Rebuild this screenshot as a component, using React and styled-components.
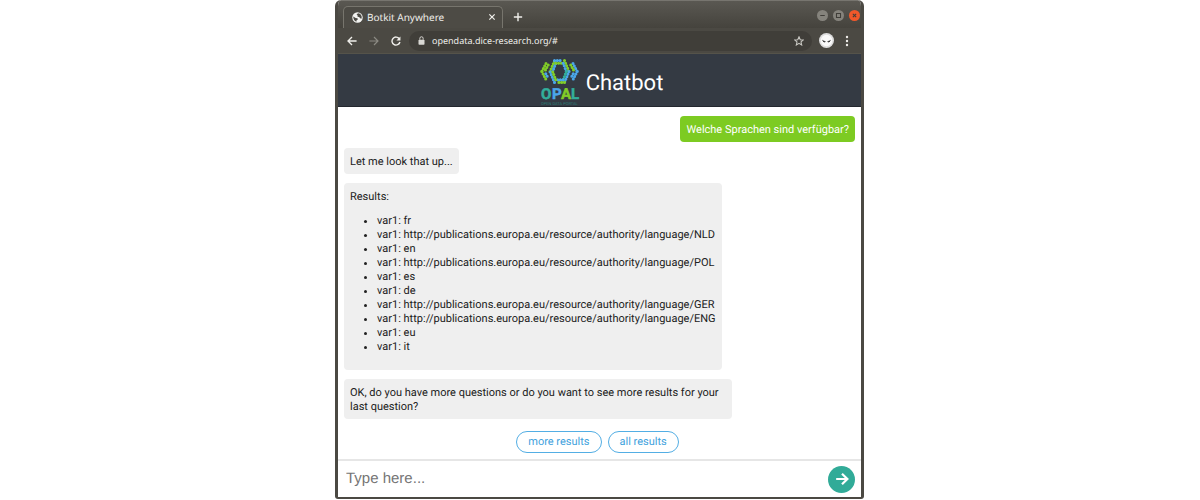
import React from "react";
import styled, { createGlobalStyle } from "styled-components";

const ui = `"Noto Sans", "Open Sans", sans-serif`;

const GlobalStyle = createGlobalStyle`
  * { box-sizing: border-box; }
  body { margin: 0; background: #fff; font-family: Roboto, sans-serif; text-rendering: geometricPrecision; }
  button { font: inherit; text-rendering: inherit; padding: 0; border: 0; background: none; color: inherit; cursor: pointer; }
  svg { display: block; flex: none; }
`;

const Page = styled.div`
  min-height: 100vh;
  padding: 0 1px 1px 0;
  display: flex;
  justify-content: center;
`;

const Window = styled.div`
  width: 100%;
  max-width: 529px;
  display: flex;
  flex-direction: column;
  background: #fff;
  border: solid #4b4943;
  border-width: 0 3px 2px;
  border-radius: 6px 6px 3px 3px;
  overflow: hidden;
`;

const TitleBar = styled.div`
  height: 28px;
  display: flex;
  align-items: flex-end;
  background: linear-gradient(#5a5852, #45433d);
  border-top: 1px solid #77756f;
  color: #efeeea;
  font: 10px/14px ${ui};
`;

const Tab = styled.div`
  width: 160px;
  height: 22px;
  margin-left: 5px;
  padding: 0 6px 1px 8px;
  display: flex;
  align-items: center;
  gap: 4px;
  background: #4d4b45;
  border: 1px solid #77756d;
  border-bottom: 0;
  border-radius: 5px 5px 0 0;
`;

const TabTitle = styled.span`
  flex: 1;
`;

const IconButton = styled.button`
  display: grid;
  place-items: center;
  width: ${(p) => p.$size || 12}px;
  height: ${(p) => p.$size || 12}px;
`;

const NewTab = styled(IconButton)`
  margin: 0 auto 5px 9px;
`;

const WindowControls = styled.div`
  display: flex;
  gap: 5px;
  padding: 0 1px 7px 0;
`;

const Control = styled.button`
  width: 11px;
  height: 11px;
  display: grid;
  place-items: center;
  border-radius: 50%;
  background: ${(p) => (p.$close ? "#f0582a" : "#85837c")};
  color: #403e39;
`;

const Toolbar = styled.div`
  height: 26px;
  padding: 0 8px;
  display: flex;
  align-items: center;
  gap: 7px;
  background: #4b4943;
  border-bottom: 1px solid #55534a;
  color: #efeeea;
`;

const Navigation = styled.nav`
  display: flex;
  gap: 10px;
`;

const AddressBar = styled.div`
  flex: 1;
  height: 20px;
  padding: 0 7px 0 8px;
  display: flex;
  align-items: center;
  gap: 6px;
  border-radius: 10px;
  background: #403e39;
`;

const Address = styled.input`
  flex: 1;
  min-width: 0;
  padding: 0;
  border: 0;
  outline: 0;
  background: none;
  color: #efeeea;
  font: 9px/14px ${ui};
  text-rendering: inherit;
`;

const Header = styled.header`
  height: 53px;
  display: flex;
  align-items: center;
  justify-content: center;
  gap: 6px;
  padding: 2px 0 0 4px;
  background: #343a43;
  border-bottom: 1px solid #23272e;
  color: #fff;
`;

const Title = styled.h1`
  margin: 0;
  padding-top: 5px;
  font-size: 22px;
  line-height: 28px;
  font-weight: 400;
`;

const Messages = styled.main`
  flex: 1;
  padding: 9px 6px 6px;
  display: flex;
  flex-direction: column;
  align-items: flex-start;
  gap: 9px;
  font-size: 11px;
  line-height: 14px;
  color: #212121;
`;

const Bubble = styled.div`
  max-width: 76%;
  padding: 7px 6px 5px;
  border-radius: 4px;
  background: #efefef;
`;

const OwnBubble = styled(Bubble)`
  align-self: flex-end;
  margin-bottom: -3px;
  background: #7dcb22;
  color: #fff;
`;

const ResultList = styled.ul`
  margin: 10px 0 11px;
  padding-left: 27px;
`;

const Replies = styled.div`
  align-self: center;
  display: flex;
  gap: 6px;
  margin: 3px 4px 0 0;
`;

const Reply = styled.button`
  height: 22px;
  padding: 0 11px;
  border: 1px solid #53aee4;
  border-radius: 11px;
  color: #3fa2dd;
`;

const Composer = styled.form`
  height: 38px;
  padding: 0 6px 0 8px;
  display: flex;
  align-items: center;
  border-top: 2px solid #e6e6e6;
`;

const MessageInput = styled.input`
  flex: 1;
  min-width: 0;
  padding: 0;
  border: 0;
  outline: 0;
  background: none;
  font: 15px/20px "Liberation Sans", sans-serif;
  text-rendering: inherit;
  &::placeholder { color: #757575; }
`;

const SendButton = styled.button`
  width: 27px;
  height: 27px;
  display: grid;
  place-items: center;
  border-radius: 50%;
  background: #31ab98;
  color: #fff;
`;

const Stroke = ({ size = 10, width = 1.4, children, ...rest }) => (
  <svg width={size} height={size} viewBox="0 0 12 12" fill="none" stroke="currentColor" strokeWidth={width} {...rest}>
    {children}
  </svg>
);

const GREEN = "#80cc28";
const BLUE = "#4ba6e8";
const TEAL = "#32ae9b";

const logoDots = [
  [GREEN, "M6 5.5 L1.8 13.5"],
  [GREEN, "M1.8 13.5 L6 21.5"],
  [GREEN, "M8.2 7 L4.6 13.5"],
  [BLUE, "M5.8 15.8 L8.2 20"],
  [BLUE, "M33 5.5 L37.2 13.5"],
  [BLUE, "M37.2 13.5 L33 21.5"],
  [GREEN, "M30.8 7 L34.4 13.5"],
  [BLUE, "M33.2 15.8 L30.8 20"],
  [GREEN, "M10 13.5 L14.5 3"],
  [BLUE, "M14.5 2.6 L22.4 2.6"],
  [GREEN, "M24.5 2.6 L29 13.5"],
  [BLUE, "M29 13.5 L24.5 24.4"],
  [GREEN, "M24.5 24.4 L16.6 24.4"],
  [BLUE, "M14.5 24.4 L10 13.5"],
  [BLUE, "M12.6 13.5 L15.8 5.2"],
  [GREEN, "M15.8 5.2 L23.2 5.2"],
  [BLUE, "M23.2 5.2 L26.4 13.5"],
  [TEAL, "M26.4 13.5 L23.2 21.8"],
  [BLUE, "M23.2 21.8 L15.8 21.8"],
  [GREEN, "M15.8 21.8 L12.6 13.5"],
];

const OpalLogo = () => (
  <svg width="40" height="50" viewBox="0 0 40 50" role="img" aria-label="OPAL Open Data Portal">
    <g transform="translate(0 2)">
      {logoDots.map(([color, d]) => (
        <path key={d} d={d} fill="none" stroke={color} strokeWidth="3.1" strokeLinecap="round" strokeDasharray="0 2.8" />
      ))}
    </g>
    <g fontFamily="Roboto, sans-serif" fontWeight="700" fontSize="15" strokeWidth="0.5">
      <text x="1" y="43" fill={TEAL} stroke={TEAL}>O</text>
      <text x="12" y="43" fill={BLUE} stroke={BLUE}>P</text>
      <text x="21" y="43" fill={GREEN} stroke={GREEN}>A</text>
      <text x="31" y="43" fill={TEAL} stroke={TEAL}>L</text>
    </g>
    <text x="1" y="49" fill="#2b8179" fontFamily="Roboto, sans-serif" fontSize="4">OPEN DATA PORTAL</text>
  </svg>
);

const results = [
  "fr",
  "http://publications.europa.eu/resource/authority/language/NLD",
  "en",
  "http://publications.europa.eu/resource/authority/language/POL",
  "es",
  "de",
  "http://publications.europa.eu/resource/authority/language/GER",
  "http://publications.europa.eu/resource/authority/language/ENG",
  "eu",
  "it",
];

export default function App() {
  return (
    <Page>
      <GlobalStyle />
      <Window>
        <TitleBar>
          <Tab>
            <svg width="11" height="11" viewBox="0 0 12 12">
              <circle cx="6" cy="6" r="5.7" fill="#f3f3f1" />
              <path d="M1.3 5 L4 6.6 L6 6.8 L6.4 8.2 L5 9 L4.8 10.6 Q1.6 9.6 1.3 5Z M6.5 1.4 L5 3 L6.4 4.2 L5.8 5 L8 5.6 L9.2 7.2 L10.6 7 Q11 4 9.2 2.4 Q8 1.4 6.5 1.4Z" fill="#4d4b45" />
            </svg>
            <TabTitle>Botkit Anywhere</TabTitle>
            <IconButton $size={8} aria-label="Close tab">
              <Stroke size={8} width={1.8}><path d="M2 2 L10 10 M10 2 L2 10" /></Stroke>
            </IconButton>
          </Tab>
          <NewTab aria-label="New tab">
            <Stroke size={10} width={1.7}><path d="M6 1 V11 M1 6 H11" /></Stroke>
          </NewTab>
          <WindowControls>
            <Control aria-label="Minimize"><Stroke size={9}><path d="M3 6 H9" /></Stroke></Control>
            <Control aria-label="Maximize"><Stroke size={9}><path d="M3.3 3.3 H8.7 V8.7 H3.3Z" /></Stroke></Control>
            <Control $close aria-label="Close window"><Stroke size={9}><path d="M3.8 3.8 L8.2 8.2 M8.2 3.8 L3.8 8.2" /></Stroke></Control>
          </WindowControls>
        </TitleBar>
        <Toolbar>
          <Navigation aria-label="History">
            <IconButton aria-label="Back">
              <Stroke width={1.6}><path d="M11.5 6 H1.5 M6 1.2 L1.2 6 L6 10.8" /></Stroke>
            </IconButton>
            <IconButton aria-label="Forward">
              <Stroke color="#8c8a83" width={1.4}><path d="M0.5 6 H10.5 M6 1.2 L10.8 6 L6 10.8" /></Stroke>
            </IconButton>
            <IconButton aria-label="Reload">
              <Stroke width={1.7}><path d="M10 3.4 A4.8 4.8 0 1 0 10.7 7.2" /><path d="M11.3 0.6 V5.4 H6.5Z" fill="currentColor" stroke="none" /></Stroke>
            </IconButton>
          </Navigation>
          <AddressBar>
            <svg width="9" height="9" viewBox="0 0 12 12">
              <rect x="2" y="5" width="8" height="6.5" rx="1" fill="#d9d8d4" />
              <path d="M3.8 5 V3.2 A2.2 2.2 0 0 1 8.2 3.2 V5" fill="none" stroke="#d9d8d4" strokeWidth="1.3" />
            </svg>
            <Address aria-label="Address" defaultValue="opendata.dice-research.org/#" />
            <IconButton aria-label="Bookmark">
              <Stroke color="#c9c8c3" width={1.3}><path d="M6 1 L7.5 4.4 L11.2 4.7 L8.4 7.1 L9.2 10.8 L6 8.8 L2.8 10.8 L3.6 7.1 L0.8 4.7 L4.5 4.4Z" /></Stroke>
            </IconButton>
          </AddressBar>
          <IconButton $size={15} aria-label="Profile">
            <svg width="15" height="15" viewBox="0 0 16 16">
              <circle cx="8" cy="8" r="8" fill="#dedede" />
              <circle cx="8" cy="8" r="6.2" fill="#fafafa" />
              <path d="M3.6 7.6 L7 9.2 Q5 10.8 3.6 7.6Z M12.4 7.6 L9 9.2 Q11 10.8 12.4 7.6Z" fill="#222" stroke="#222" strokeWidth="0.3" />
            </svg>
          </IconButton>
          <IconButton aria-label="Menu">
            <svg width="12" height="12" viewBox="0 0 12 12" fill="currentColor">
              <circle cx="6" cy="2" r="1.2" /><circle cx="6" cy="6" r="1.2" /><circle cx="6" cy="10" r="1.2" />
            </svg>
          </IconButton>
        </Toolbar>
        <Header>
          <OpalLogo />
          <Title>Chatbot</Title>
        </Header>
        <Messages>
          <OwnBubble>Welche Sprachen sind verfügbar?</OwnBubble>
          <Bubble>Let me look that up...</Bubble>
          <Bubble>
            Results:
            <ResultList>
              {results.map((r) => <li key={r}>var1: {r}</li>)}
            </ResultList>
          </Bubble>
          <Bubble>
            OK, do you have more questions or do you want to see more results for your last question?
          </Bubble>
          <Replies>
            <Reply type="button">more results</Reply>
            <Reply type="button">all results</Reply>
          </Replies>
        </Messages>
        <Composer onSubmit={(e) => e.preventDefault()}>
          <MessageInput aria-label="Message" placeholder="Type here..." />
          <SendButton aria-label="Send">
            <Stroke size={14} width={1.9}><path d="M1 6 H10.5 M6 1.5 L10.6 6 L6 10.5" /></Stroke>
          </SendButton>
        </Composer>
      </Window>
    </Page>
  );
}
